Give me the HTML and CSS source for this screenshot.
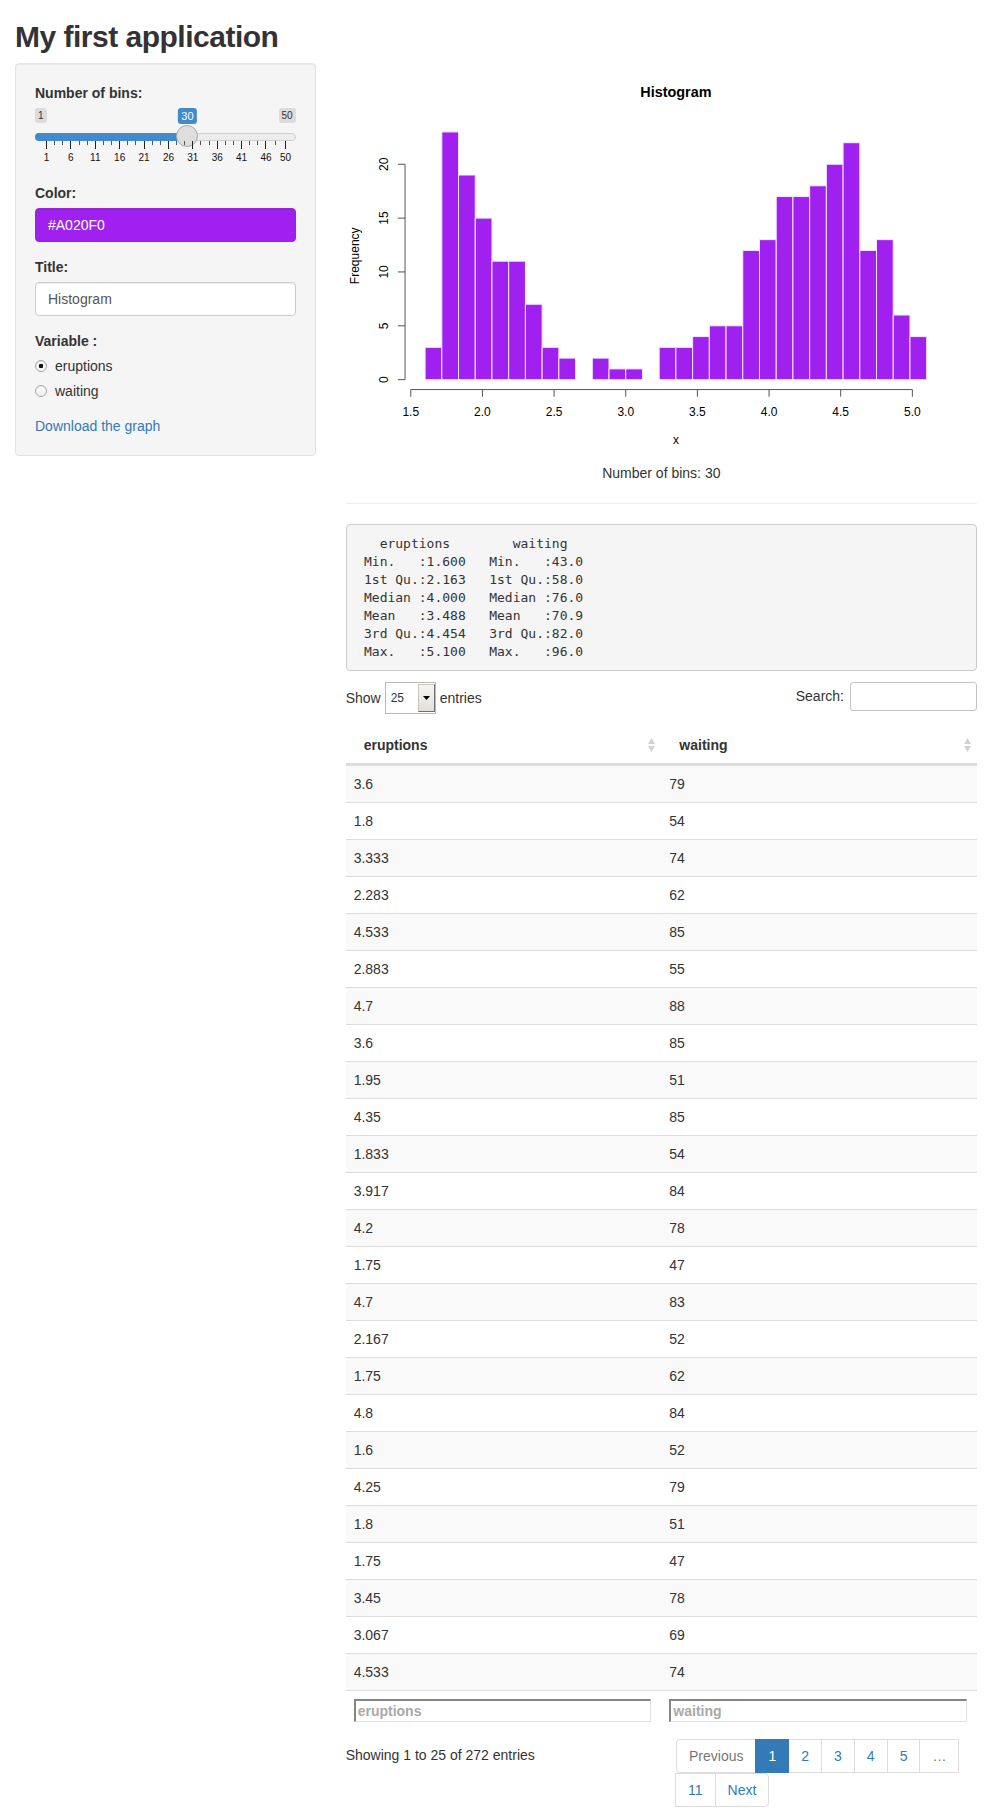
FILE: index.html
```html
<!DOCTYPE html>
<html lang="en">
<head>
<meta charset="utf-8">
<title>My first application</title>
<link rel="stylesheet" href="styles.css">
</head>
<body>
<div class="container-fluid">
  <h2 class="app-title">My first application</h2>
  <div class="row">
    <div class="sidebar">
      <form class="well">
        <div class="form-group">
          <label class="control-label">Number of bins:</label>
          <div class="irs">
            <span class="irs-line"></span>
            <span class="irs-bar" style="width: 152.4px"></span>
            <span class="irs-min">1</span>
            <span class="irs-max">50</span>
            <span class="irs-single" style="left: 152.4px">30</span>
            <span class="irs-slider" style="left: 141.4px"></span>
            <span class="irs-grid">
              <span class="pol" style="left: 11px"></span>
              <span class="pol small" style="left: 19.13px"></span>
              <span class="pol small" style="left: 27.26px"></span>
              <span class="pol" style="left: 35.39px"></span>
              <span class="pol small" style="left: 43.52px"></span>
              <span class="pol small" style="left: 51.65px"></span>
              <span class="pol" style="left: 59.78px"></span>
              <span class="pol small" style="left: 67.91px"></span>
              <span class="pol small" style="left: 76.04px"></span>
              <span class="pol" style="left: 84.16px"></span>
              <span class="pol small" style="left: 92.29px"></span>
              <span class="pol small" style="left: 100.42px"></span>
              <span class="pol" style="left: 108.55px"></span>
              <span class="pol small" style="left: 116.68px"></span>
              <span class="pol small" style="left: 124.81px"></span>
              <span class="pol" style="left: 132.94px"></span>
              <span class="pol small" style="left: 141.07px"></span>
              <span class="pol small" style="left: 149.2px"></span>
              <span class="pol" style="left: 157.33px"></span>
              <span class="pol small" style="left: 165.46px"></span>
              <span class="pol small" style="left: 173.59px"></span>
              <span class="pol" style="left: 181.71px"></span>
              <span class="pol small" style="left: 189.84px"></span>
              <span class="pol small" style="left: 197.97px"></span>
              <span class="pol" style="left: 206.1px"></span>
              <span class="pol small" style="left: 214.23px"></span>
              <span class="pol small" style="left: 222.36px"></span>
              <span class="pol" style="left: 230.49px"></span>
              <span class="pol small" style="left: 240.24px"></span>
              <span class="pol" style="left: 250px"></span>
              <span class="grid-text" style="left: 11.5px">1</span>
              <span class="grid-text" style="left: 35.89px">6</span>
              <span class="grid-text" style="left: 60.28px">11</span>
              <span class="grid-text" style="left: 84.66px">16</span>
              <span class="grid-text" style="left: 109.05px">21</span>
              <span class="grid-text" style="left: 133.44px">26</span>
              <span class="grid-text" style="left: 157.83px">31</span>
              <span class="grid-text" style="left: 182.21px">36</span>
              <span class="grid-text" style="left: 206.6px">41</span>
              <span class="grid-text" style="left: 230.99px">46</span>
              <span class="grid-text" style="left: 250.5px">50</span>
            </span>
          </div>
        </div>
        <div class="form-group">
          <label class="control-label" for="color">Color:</label>
          <input id="color" class="form-control color-input" type="text" value="#A020F0">
        </div>
        <div class="form-group">
          <label class="control-label" for="title">Title:</label>
          <input id="title" class="form-control" type="text" value="Histogram">
        </div>
        <div class="form-group">
          <label class="control-label">Variable :</label>
          <div class="options">
            <label class="radio"><input type="radio" name="var" checked><span>eruptions</span></label>
            <label class="radio"><input type="radio" name="var"><span>waiting</span></label>
          </div>
        </div>
        <div class="download"><a href="#">Download the graph</a></div>
      </form>
    </div>

    <div class="main">
      <div class="plot">
        <svg class="hist" width="631" height="400" viewBox="0 0 631 400">
          <text class="main-title" x="329.9" y="34">Histogram</text>
          <g class="bars" transform="translate(79.1 316.65) scale(16.7195 -10.77)">
            <rect x="0" y="0" width="1" height="3"/>
            <rect x="1" y="0" width="1" height="23"/>
            <rect x="2" y="0" width="1" height="19"/>
            <rect x="3" y="0" width="1" height="15"/>
            <rect x="4" y="0" width="1" height="11"/>
            <rect x="5" y="0" width="1" height="11"/>
            <rect x="6" y="0" width="1" height="7"/>
            <rect x="7" y="0" width="1" height="3"/>
            <rect x="8" y="0" width="1" height="2"/>
            <rect x="10" y="0" width="1" height="2"/>
            <rect x="11" y="0" width="1" height="1"/>
            <rect x="12" y="0" width="1" height="1"/>
            <rect x="14" y="0" width="1" height="3"/>
            <rect x="15" y="0" width="1" height="3"/>
            <rect x="16" y="0" width="1" height="4"/>
            <rect x="17" y="0" width="1" height="5"/>
            <rect x="18" y="0" width="1" height="5"/>
            <rect x="19" y="0" width="1" height="12"/>
            <rect x="20" y="0" width="1" height="13"/>
            <rect x="21" y="0" width="1" height="17"/>
            <rect x="22" y="0" width="1" height="17"/>
            <rect x="23" y="0" width="1" height="18"/>
            <rect x="24" y="0" width="1" height="20"/>
            <rect x="25" y="0" width="1" height="22"/>
            <rect x="26" y="0" width="1" height="12"/>
            <rect x="27" y="0" width="1" height="13"/>
            <rect x="28" y="0" width="1" height="6"/>
            <rect x="29" y="0" width="1" height="4"/>
          </g>
          <path class="axis" d="M64.77 326.56H566.36M64.77 326.56v7.2M136.43 326.56v7.2M208.08 326.56v7.2M279.74 326.56v7.2M351.39 326.56v7.2M423.05 326.56v7.2M494.7 326.56v7.2M566.36 326.56v7.2"/>
          <path class="axis" d="M59.04 316.65V101.25M59.04 316.65h-7.2M59.04 262.8h-7.2M59.04 208.95h-7.2M59.04 155.1h-7.2M59.04 101.25h-7.2"/>
          <g class="tick-labels">
            <text x="64.77" y="353">1.5</text>
            <text x="136.43" y="353">2.0</text>
            <text x="208.08" y="353">2.5</text>
            <text x="279.74" y="353">3.0</text>
            <text x="351.39" y="353">3.5</text>
            <text x="423.05" y="353">4.0</text>
            <text x="494.7" y="353">4.5</text>
            <text x="566.36" y="353">5.0</text>
            <text transform="translate(42 316.65) rotate(-90)">0</text>
            <text transform="translate(42 262.8) rotate(-90)">5</text>
            <text transform="translate(42 208.95) rotate(-90)">10</text>
            <text transform="translate(42 155.1) rotate(-90)">15</text>
            <text transform="translate(42 101.25) rotate(-90)">20</text>
            <text transform="translate(13.2 192.8) rotate(-90)">Frequency</text>
            <text x="329.9" y="381">x</text>
          </g>
        </svg>
      </div>
      <div class="bins-text">Number of bins: 30</div>
      <hr>
      <pre class="summary">   eruptions        waiting    
 Min.   :1.600   Min.   :43.0  
 1st Qu.:2.163   1st Qu.:58.0  
 Median :4.000   Median :76.0  
 Mean   :3.488   Mean   :70.9  
 3rd Qu.:4.454   3rd Qu.:82.0  
 Max.   :5.100   Max.   :96.0  </pre>

      <div class="dt-wrapper">
        <div class="dt-top">
          <div class="dt-length">
            <label>Show
              <span class="select-wrap">
                <select><option>25</option></select>
                <span class="select-btn"><svg width="7" height="4" viewBox="0 0 7 4"><path d="M0 0H7L3.5 4Z"/></svg></span>
              </span>
              entries</label>
          </div>
          <div class="dt-filter">
            <label>Search:<input type="search"></label>
          </div>
        </div>
        <table class="dt">
          <thead>
            <tr>
              <th><div class="th-inner"><span>eruptions</span><svg class="sort" width="7" height="16" viewBox="0 0 7 16"><path d="M0 7L3.5 1L7 7Z M0 9H7L3.5 15Z"/></svg></div></th>
              <th><div class="th-inner"><span>waiting</span><svg class="sort" width="7" height="16" viewBox="0 0 7 16"><path d="M0 7L3.5 1L7 7Z M0 9H7L3.5 15Z"/></svg></div></th>
            </tr>
          </thead>
          <tbody>
            <tr><td>3.6</td><td>79</td></tr>
            <tr><td>1.8</td><td>54</td></tr>
            <tr><td>3.333</td><td>74</td></tr>
            <tr><td>2.283</td><td>62</td></tr>
            <tr><td>4.533</td><td>85</td></tr>
            <tr><td>2.883</td><td>55</td></tr>
            <tr><td>4.7</td><td>88</td></tr>
            <tr><td>3.6</td><td>85</td></tr>
            <tr><td>1.95</td><td>51</td></tr>
            <tr><td>4.35</td><td>85</td></tr>
            <tr><td>1.833</td><td>54</td></tr>
            <tr><td>3.917</td><td>84</td></tr>
            <tr><td>4.2</td><td>78</td></tr>
            <tr><td>1.75</td><td>47</td></tr>
            <tr><td>4.7</td><td>83</td></tr>
            <tr><td>2.167</td><td>52</td></tr>
            <tr><td>1.75</td><td>62</td></tr>
            <tr><td>4.8</td><td>84</td></tr>
            <tr><td>1.6</td><td>52</td></tr>
            <tr><td>4.25</td><td>79</td></tr>
            <tr><td>1.8</td><td>51</td></tr>
            <tr><td>1.75</td><td>47</td></tr>
            <tr><td>3.45</td><td>78</td></tr>
            <tr><td>3.067</td><td>69</td></tr>
            <tr><td>4.533</td><td>74</td></tr>
          </tbody>
          <tfoot>
            <tr>
              <th><input type="text" placeholder="eruptions"></th>
              <th><input type="text" placeholder="waiting"></th>
            </tr>
          </tfoot>
        </table>
        <div class="dt-bottom">
          <div class="dt-info">Showing 1 to 25 of 272 entries</div>
          <ul class="pagination">
            <li class="disabled"><a>Previous</a></li>
            <li class="active"><a>1</a></li>
            <li><a href="#">2</a></li>
            <li><a href="#">3</a></li>
            <li><a href="#">4</a></li>
            <li><a href="#">5</a></li>
            <li class="disabled"><a>…</a></li>
            <li><a href="#">11</a></li>
            <li><a href="#">Next</a></li>
          </ul>
        </div>
      </div>
    </div>
  </div>
</div>
</body>
</html>
```

FILE: styles.css
```css
* { box-sizing: border-box; }

html, body {
  margin: 0;
  padding: 0;
  background: #fff;
}

body {
  font-family: "Liberation Sans", Arial, Helvetica, sans-serif;
  font-size: 14px;
  line-height: 20px;
  color: #333;
}

a { color: #337ab7; text-decoration: none; }

.container-fluid { padding: 0 15px; }

.app-title {
  margin: 20px 0 10px;
  font-size: 30px;
  line-height: 33px;
  font-weight: 700;
  letter-spacing: -0.5px;
  color: #333;
}

.row { display: flex; margin: 0 -15px; }
.sidebar { width: 33.3333%; padding: 0 15px; flex: none; }
.main { width: 66.6667%; padding: 0 15px; flex: none; }

/* ---------- sidebar ---------- */
.well {
  margin: 0 0 20px;
  padding: 19px;
  background: #f5f5f5;
  border: 1px solid #e3e3e3;
  border-radius: 4px;
  box-shadow: inset 0 1px 1px rgba(0, 0, 0, .05);
}

.form-group { margin-bottom: 15px; }

.control-label {
  display: block;
  margin-bottom: 5px;
  font-weight: 700;
}

.form-control {
  display: block;
  width: 100%;
  height: 34px;
  padding: 6px 12px;
  font: inherit;
  font-size: 14px;
  line-height: 20px;
  color: #555;
  background: #fff;
  border: 1px solid #ccc;
  border-radius: 4px;
  box-shadow: inset 0 1px 1px rgba(0, 0, 0, .075);
  margin: 0;
}

.color-input {
  background: #a020f0;
  color: #fff;
  border-color: #9a24dc;
}

.options .radio {
  display: flex;
  align-items: center;
  height: 20px;
  font-weight: 400;
}
.options .radio + .radio { margin-top: 5px; }

.radio input {
  appearance: none;
  -webkit-appearance: none;
  width: 12px;
  height: 12px;
  margin: 0 8px 0 0;
  border-radius: 50%;
  border: 1px solid #a8a8a8;
  background: linear-gradient(#ffffff, #ececec);
  box-shadow: inset 0 1px 1px rgba(0, 0, 0, .08);
}
.radio input:checked {
  background: radial-gradient(circle, #111 0, #111 2px, #fff 2.6px, #ececec 100%);
}

.download { line-height: 20px; }

/* ---------- slider ---------- */
.irs {
  position: relative;
  height: 60px;
}
.irs-line {
  position: absolute;
  left: 0;
  right: 0;
  top: 25px;
  height: 8px;
  background: #ededed;
  border: 1px solid #cfcfcf;
  border-radius: 16px;
}
.irs-bar {
  position: absolute;
  left: 0;
  top: 25px;
  height: 8px;
  background: #428bca;
  border-radius: 16px 0 0 16px;
}
.irs-min, .irs-max {
  position: absolute;
  top: 0;
  padding: 1px 3px;
  font-size: 10px;
  line-height: 13px;
  color: #333;
  background: rgba(0, 0, 0, .1);
  border-radius: 3px;
}
.irs-min { left: 0; }
.irs-max { right: 0; }
.irs-single {
  position: absolute;
  top: 0;
  padding: 1px 3px;
  font-size: 11px;
  line-height: 14px;
  color: #fff;
  background: #428bca;
  border-radius: 3px;
  transform: translateX(-50%);
}
.irs-slider {
  position: absolute;
  top: 17px;
  width: 22px;
  height: 22px;
  background: #dedede;
  border: 1px solid #aaa;
  border-radius: 50%;
}
.irs-grid {
  position: absolute;
  left: 0;
  right: 0;
  top: 33px;
  height: 27px;
}
.pol {
  position: absolute;
  top: 0;
  width: 1px;
  height: 8px;
  background: #222;
}
.pol.small { height: 4px; background: #555; }
.grid-text {
  position: absolute;
  top: 11px;
  font-size: 10px;
  line-height: 12px;
  color: #111;
  white-space: nowrap;
  transform: translateX(-50%);
}

/* ---------- plot ---------- */
.plot { width: 631px; height: 400px; }
.hist { display: block; }
.hist .bars rect {
  fill: #a020f0;
  stroke: #f4e8ff;
  stroke-width: 1;
  vector-effect: non-scaling-stroke;
}
.hist .axis {
  fill: none;
  stroke: #555;
  stroke-width: 1;
}
.hist text {
  font-family: "Liberation Sans", Arial, sans-serif;
  font-size: 12px;
  fill: #000;
  text-anchor: middle;
}
.hist .main-title {
  font-size: 14.4px;
  font-weight: 700;
}

.bins-text {
  text-align: center;
  line-height: 20px;
}

hr {
  margin: 20px 0;
  border: 0;
  border-top: 1px solid #eee;
  height: 0;
}

.summary {
  margin: 0 0 10px;
  padding: 9.5px;
  font-family: "DejaVu Sans Mono", "Liberation Mono", monospace;
  font-size: 13px;
  line-height: 18px;
  color: #333;
  background: #f5f5f5;
  border: 1px solid #ccc;
  border-radius: 4px;
  white-space: pre;
  overflow: hidden;
}

/* ---------- data table ---------- */
.dt-top {
  display: flex;
  justify-content: space-between;
  align-items: flex-start;
  height: 40px;
}
.dt-length label {
  display: flex;
  align-items: center;
  gap: 4px;
  height: 34px;
  font-weight: 400;
}
.select-wrap {
  position: relative;
  display: inline-block;
  height: 32px;
}
.select-wrap select {
  appearance: none;
  -webkit-appearance: none;
  display: block;
  width: 51px;
  height: 32px;
  margin: 0;
  padding: 0 0 0 5px;
  font-family: "Liberation Sans", Arial, sans-serif;
  font-size: 12px;
  color: #333;
  background: #fff;
  border: 1px solid #b9b9b9;
  border-radius: 0;
}
.select-btn {
  position: absolute;
  top: 2px;
  right: 1px;
  bottom: 2px;
  width: 17px;
  display: flex;
  align-items: center;
  justify-content: center;
  background: linear-gradient(#f7f6f3, #e2dfd8);
  border: 1px solid #c9c6bf;
  border-right-color: #6f6f6f;
  border-bottom-color: #6f6f6f;
  pointer-events: none;
}
.select-btn svg { display: block; fill: #000; }

.dt-filter label {
  display: flex;
  align-items: center;
  height: 30px;
  font-weight: 400;
}
.dt-filter input {
  width: 127px;
  height: 29px;
  margin: 1px 0 0 6px;
  padding: 2px 6px;
  font: inherit;
  border: 1px solid #c4c4c4;
  border-radius: 3px;
  background: #fff;
}

.dt {
  width: 100%;
  margin: 6px 0 6px;
  border-collapse: separate;
  border-spacing: 0;
  table-layout: fixed;
}
.dt th, .dt td {
  text-align: left;
  line-height: 20px;
}
.dt thead th {
  padding: 8px 6px 8px 18px;
  font-weight: 700;
  border-bottom: 2px solid #ddd;
  vertical-align: bottom;
}
.th-inner {
  display: flex;
  justify-content: space-between;
  align-items: center;
}
.sort { display: block; fill: #d2d2d2; }

.dt tbody td {
  padding: 8px;
  border-top: 1px solid #ddd;
}
.dt tbody tr:nth-child(odd) td { background: #f9f9f9; }

.dt tfoot th {
  padding: 8px 10px 9px 8px;
  border-top: 1px solid #ddd;
  font-weight: 700;
}
.dt tfoot input {
  display: block;
  width: 100%;
  height: 23px;
  margin: 0;
  padding: 1px 2px;
  font-family: "Liberation Sans", Arial, sans-serif;
  font-size: 14px;
  font-weight: 700;
  color: #333;
  background: #fff;
  border-top: 2px solid #858585;
  border-left: 2px solid #858585;
  border-right: 1px solid #e2e2e2;
  border-bottom: 1px solid #e2e2e2;
  border-radius: 0;
}
.dt tfoot input::placeholder { color: #a9a9a9; }

.dt-bottom {
  display: flex;
  align-items: flex-start;
}
.dt-info { padding-top: 8px; white-space: nowrap; }

.pagination {
  display: flex;
  flex-wrap: wrap;
  width: 301px;
  margin: 2px 0 0 auto;
  padding: 0;
  list-style: none;
}
.pagination li a {
  position: relative;
  display: block;
  padding: 6px 12px;
  margin-left: -1px;
  line-height: 20px;
  color: #337ab7;
  background: #fff;
  border: 1px solid #ddd;
}
.pagination li:first-child a {
  margin-left: 0;
  border-radius: 4px 0 0 4px;
}
.pagination li:last-child a { border-radius: 0 4px 4px 0; }
.pagination li.active a {
  z-index: 2;
  color: #fff;
  background: #337ab7;
  border-color: #337ab7;
}
.pagination li.disabled a { color: #777; }
```
